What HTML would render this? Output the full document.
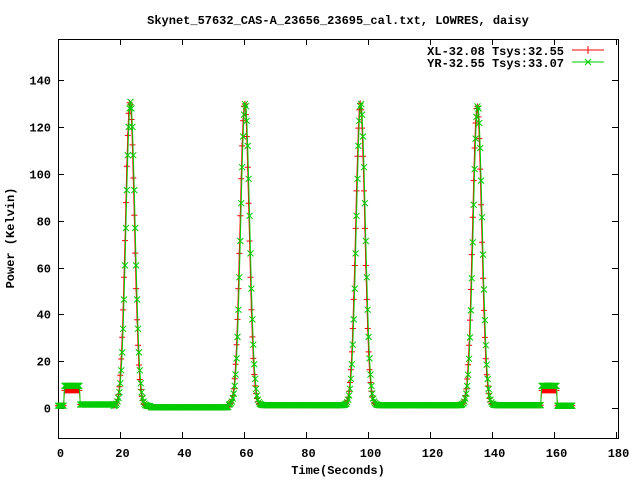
<!DOCTYPE html>
<html><head><meta charset="utf-8"><style>
html,body{margin:0;padding:0;background:#fff}
svg{display:block}
text{font-family:"Liberation Mono","DejaVu Sans Mono",monospace;font-weight:bold;font-size:12px;fill:#000}
</style></head><body>
<svg id="s" width="640" height="480" xmlns="http://www.w3.org/2000/svg">
<rect x="0" y="0" width="640" height="480" fill="#fff"/>
<text x="338" y="24" text-anchor="middle">Skynet_57632_CAS-A_23656_23695_cal.txt, LOWRES, daisy</text>
<text x="338" y="474" text-anchor="middle">Time(Seconds)</text>
<text transform="translate(14,238) rotate(-90)" text-anchor="middle">Power (Kelvin)</text>
<g id="ax" stroke="#000" stroke-width="1" fill="none"></g>
<g id="lab"></g>
<g id="data"></g>
<text x="564" y="55" text-anchor="end">XL-32.08 Tsys:32.55</text>
<text x="564" y="67" text-anchor="end">YR-32.55 Tsys:33.07</text>
<line x1="572" y1="50" x2="604" y2="50" stroke="#f00"/>
<line x1="588" y1="46" x2="588" y2="54" stroke="#f00"/>
<line x1="572" y1="62" x2="604" y2="62" stroke="#0c0"/>
<path d="M585 59l6 6M585 65l6 -6" stroke="#0c0"/>
</svg>
<script>
var NS="http://www.w3.org/2000/svg";
var L=58,R=618,T=39,B=438;
function X(t){return L+t*3.1}
function Y(v){return 408-v*2.34}
var ax=document.getElementById('ax'),lab=document.getElementById('lab'),dg=document.getElementById('data');
function el(p,tag,a,txt){var e=document.createElementNS(NS,tag);for(var k in a)e.setAttribute(k,a[k]);if(txt!=null)e.textContent=txt;p.appendChild(e);return e}
el(ax,'rect',{x:L+.5,y:T+.5,width:R-L,height:B-T});
for(var t=0;t<=180;t+=20){var x=Math.round(X(t))+.5;el(ax,'line',{x1:x,y1:B,x2:x,y2:B-6});el(ax,'line',{x1:x,y1:T,x2:x,y2:T+6});el(lab,'text',{x:x+2,y:457,'text-anchor':'middle'},t)}
for(var v=0;v<=140;v+=20){var y=Math.round(Y(v))+.5;el(ax,'line',{x1:L,y1:y,x2:L+6,y2:y});el(ax,'line',{x1:R,y1:y,x2:R-6,y2:y});el(lab,'text',{x:51,y:y+4,'text-anchor':'end'},v)}
var peaks=[[23.2,130],[60.2,129],[97.5,129],[135.2,128]];
function f(t,g){var v;
 if(t<2)v=1;else if(t<7)v=g?9.5:7.5;else if(t<18)v=1.5;else if(t<30)v=0.8;else if(t<55)v=0.3;else if(t<156)v=1.2;else if(t<161)v=g?9.5:7.5;else v=1;
 for(var i=0;i<peaks.length;i++){var d=t-peaks[i][0]-(g?0.2:0);v+=peaks[i][1]*Math.exp(-d*d/(2*1.45*1.45))}
 return v}
var pr=[],pg=[],dr='',dgp='';
for(var t=0;t<=166;t+=0.3){var x=X(t),yr=Y(f(t,0)),yg=Y(f(t,1));pr.push(x.toFixed(1)+','+yr.toFixed(1));pg.push(x.toFixed(1)+','+yg.toFixed(1));
 dr+='M'+(x-3).toFixed(1)+' '+yr.toFixed(1)+'h6M'+x.toFixed(1)+' '+(yr-3).toFixed(1)+'v6';
 dgp+='M'+(x-3).toFixed(1)+' '+(yg-3).toFixed(1)+'l6 6M'+(x-3).toFixed(1)+' '+(yg+3).toFixed(1)+'l6 -6';}
el(dg,'polyline',{points:pr.join(' '),fill:'none',stroke:'#f00'});
el(dg,'path',{d:dr,fill:'none',stroke:'#f00'});
el(dg,'polyline',{points:pg.join(' '),fill:'none',stroke:'#0c0'});
el(dg,'path',{d:dgp,fill:'none',stroke:'#0c0'});
</script>
</body></html>
